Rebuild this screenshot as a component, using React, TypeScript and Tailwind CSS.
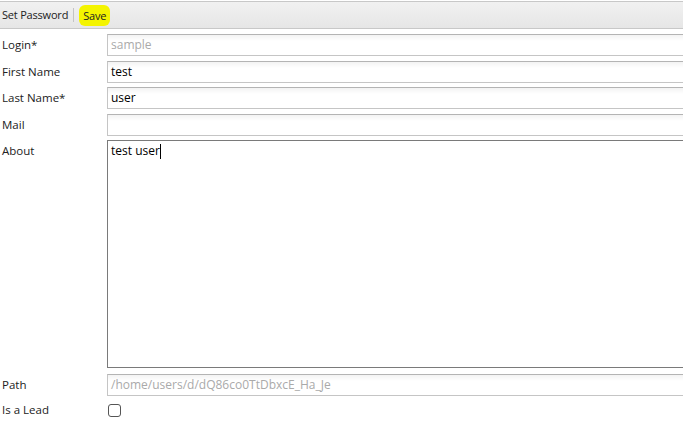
import React from "react";

const inputCls =
  "h-[22px] w-[600px] shrink-0 border border-[#c5c5c5] border-t-[#b4b4b4] bg-gradient-to-b from-[#f3f3f3] to-white to-[30%] px-[3px] text-[12px] leading-[20px] outline-none";

function Row({ label, children, top }: { label: string; children: React.ReactNode; top: number }) {
  return (
    <div className="flex items-start" style={{ marginTop: top }}>
      <div className="w-[107px] shrink-0 pl-[2px] pt-[3px] text-[11.5px] leading-[16px] text-[#222]">{label}</div>
      {children}
    </div>
  );
}

export default function App() {
  return (
    <div
      className="w-[683px] h-[446px] overflow-hidden bg-white text-black"
      style={{ fontFamily: '"Open Sans", "Liberation Sans", sans-serif' }}
    >
      <div className="mt-[1px] h-[28px] border-t border-b border-[#c8c8c8] bg-gradient-to-b from-[#f1f1f1] to-[#e6e6e6] flex items-center text-[11px] tracking-[-0.2px] text-[#222]">
        <span className="pl-[2px]">Set Password</span>
        <span className="ml-[5px] mr-[5px] h-[14px] w-px bg-[#c4c4c4]" />
        <span className="rounded-[6px] bg-[#f4f400] px-[4px] py-[3px] leading-[15px]">Save</span>
      </div>

      <Row label="Login*" top={5}>
        <div className={inputCls + " text-[#aaa]"}>sample</div>
      </Row>
      <Row label="First Name" top={5}>
        <div className={inputCls}>test</div>
      </Row>
      <Row label="Last Name*" top={4}>
        <div className={inputCls}>user</div>
      </Row>
      <Row label="Mail" top={5}>
        <div className={inputCls}></div>
      </Row>
      <Row label="About" top={4}>
        <div className="h-[228px] w-[600px] shrink-0 border border-[#7a7a7a] bg-white px-[3px] pt-[1px] text-[12px] leading-[18px] flex items-start">
          <span>test user</span>
          <span className="mt-[2px] h-[15px] w-px bg-black" />
        </div>
      </Row>
      <Row label="Path" top={6}>
        <div className={inputCls + " text-[12.4px] text-[#aaa]"}>/home/users/d/dQ86co0TtDbxcE_Ha_Je</div>
      </Row>
      <div className="mt-[6px] flex items-center">
        <div className="w-[107px] shrink-0 pl-[2px] text-[11.5px] leading-[16px] text-[#222]">Is a Lead</div>
        <div className="ml-[1px] h-[13px] w-[13px] rounded-[3px] border border-[#555] bg-white" />
      </div>
    </div>
  );
}
